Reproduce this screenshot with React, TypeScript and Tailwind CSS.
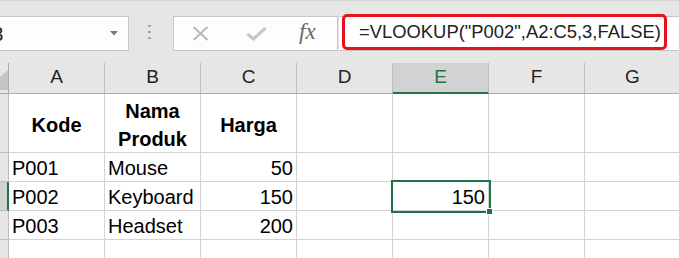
const cols = ['A', 'B', 'C', 'D', 'E', 'F', 'G']

type Row = { n: number; h: string; cells: string[] }

const rows: Row[] = [
  { n: 1, h: 'h-[59px]', cells: ['', '', '', '', '', '', ''] },
  { n: 2, h: 'h-[29px]', cells: ['P001', 'Mouse', '50', '', '', '', ''] },
  { n: 3, h: 'h-[29px]', cells: ['P002', 'Keyboard', '150', '', '150', '', ''] },
  { n: 4, h: 'h-[29px]', cells: ['P003', 'Headset', '200', '', '', '', ''] },
  { n: 5, h: 'h-[29px]', cells: ['', '', '', '', '', '', ''] },
]

const headers = ['Kode', 'Nama\nProduk', 'Harga']

function Toolbar() {
  return (
    <div className="flex h-[63px] items-start border-t border-[#d4d4d4] pt-[15px]">
      {/* name box */}
      <div className="-ml-[28px] flex h-[35px] w-[157px] shrink-0 items-center justify-between border border-[#c6c6c6] bg-[#fdfdfd] pr-[10px] pl-[6px]">
        <span className="text-[20px] text-[#222]">E3</span>
        <svg width="8" height="5" viewBox="0 0 8 5">
          <path d="M0 0 L8 0 L4 4.5 Z" fill="#7a7a7a" />
        </svg>
      </div>
      {/* grip dots */}
      <div className="ml-[19px] mt-[9px] flex flex-col gap-[4px]">
        <span className="h-[2px] w-[3px] bg-[#a8a8a8]" />
        <span className="h-[2px] w-[3px] bg-[#a8a8a8]" />
        <span className="h-[2px] w-[3px] bg-[#a8a8a8]" />
      </div>
      {/* cancel / enter / fx */}
      <div className="ml-[22px] flex h-[35px] w-[165px] shrink-0 items-center border border-[#c6c6c6] bg-[#fdfdfd]">
        <svg width="17" height="15" viewBox="0 0 17 15" className="ml-[18px]">
          <path d="M1.5 1 L15.5 14 M15.5 1 L1.5 14" stroke="#b8b8b8" strokeWidth="2" />
        </svg>
        <svg width="21" height="15" viewBox="0 0 21 15" className="ml-[37px]">
          <path d="M1.5 8 L7.5 13 L19.5 2" stroke="#c8c8c8" strokeWidth="3.2" fill="none" />
        </svg>
        <span className="ml-[32px] -mt-[2px] font-['Liberation_Serif',serif] text-[23px] italic text-[#6a6a6a]">
          fx
        </span>
      </div>
      {/* formula bar */}
      <div className="ml-[1px] flex h-[35px] flex-1 items-start border-y border-[#c6c6c6] bg-white pl-[3px]">
        <div className="-mt-[3px] flex h-[36px] w-[325px] shrink-0 items-center rounded-[5px] border-[3px] border-[#e8121f] bg-white pl-[14px]">
          <span className="whitespace-nowrap text-[18.4px] text-[#222]">=VLOOKUP("P002",A2:C5,3,FALSE)</span>
        </div>
      </div>
    </div>
  )
}

export default function App() {
  return (
    <div className="h-[258px] w-[679px] overflow-hidden bg-[#e6e6e6] font-['Liberation_Sans',Arial,sans-serif] text-black">
      <Toolbar />
      <div className="grid w-[681px] grid-cols-[9px_repeat(7,96px)]">
        {/* corner */}
        <div className="h-[31px] overflow-hidden border-r border-b border-[#ababab] bg-[#e6e6e6]">
          <svg width="8" height="30" viewBox="0 0 8 30">
            <path d="M8 7 L8 27 L-14 27 Z" fill="#c4c4c4" />
          </svg>
        </div>
        {cols.map((c) =>
          c === 'E' ? (
            <div
              key={c}
              className="flex h-[31px] items-center justify-center border-r border-b-2 border-r-[#bdbdbd] border-b-[#217346] bg-[#d2d2d2] pb-[1px] text-[19px] text-[#217346]"
            >
              {c}
            </div>
          ) : (
            <div
              key={c}
              className="flex h-[31px] items-center justify-center border-r border-b border-r-[#bdbdbd] border-b-[#ababab] bg-[#e6e6e6] pb-[1px] text-[19px] text-[#222]"
            >
              {c}
            </div>
          ),
        )}

        {rows.map((r) => (
          <div key={r.n} className="contents">
            {r.n === 3 ? (
              <div className={`${r.h} border-r-2 border-b border-r-[#217346] border-b-[#bdbdbd] bg-[#d2d2d2]`} />
            ) : (
              <div className={`${r.h} border-r border-b border-[#bdbdbd] bg-[#e6e6e6]`} />
            )}
            {r.cells.map((v, i) => {
              if (r.n === 1) {
                const t = headers[i]
                return (
                  <div
                    key={i}
                    className={`${r.h} flex items-center justify-center border-r border-b border-[#d4d4d4] bg-white pt-[3px] text-center text-[20px] leading-[28px] font-bold whitespace-pre-line`}
                  >
                    {t ?? ''}
                  </div>
                )
              }
              const num = /^\d+$/.test(v)
              const selected = r.n === 3 && i === 4
              return (
                <div
                  key={i}
                  className={`${r.h} flex items-center border-r border-b border-[#d4d4d4] bg-white px-[3px] pt-[1px] text-[20px] whitespace-nowrap ${num ? 'justify-end' : 'justify-start'} ${selected ? 'relative z-10' : ''}`}
                >
                  {v}
                  {selected && (
                    <>
                      <span className="absolute -top-[2px] -right-[3px] -bottom-[3px] -left-[2px] z-10 border-2 border-[#217346]" />
                      <span className="absolute -right-[5px] -bottom-[5px] z-20 h-[7px] w-[7px] border border-white bg-[#217346]" />
                    </>
                  )}
                </div>
              )
            })}
          </div>
        ))}
      </div>
    </div>
  )
}
